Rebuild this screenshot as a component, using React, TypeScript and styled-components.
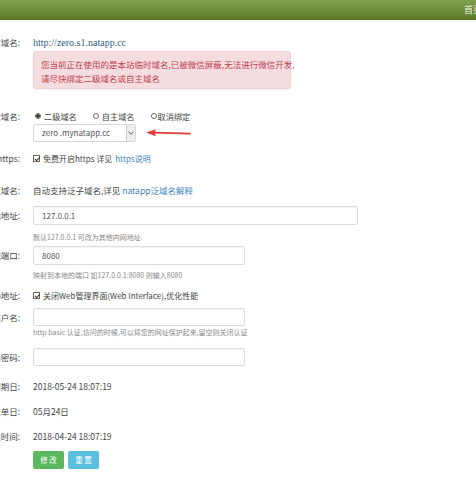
import React from "react";
import styled, { createGlobalStyle } from "styled-components";

const GlobalStyle = createGlobalStyle`
  html, body {
    margin: 0;
    padding: 0;
    background: #fff;
  }
  body {
    font-family: "Noto Sans CJK SC", "Liberation Sans", sans-serif;
    color: #333;
    overflow: hidden;
  }
`;

function App() {
  return (
    <Page>
      <GlobalStyle />
      <Header>
        <HeaderLink>首页</HeaderLink>
      </Header>
      <Form>
        <Field label="当前域名:" $top={14} $h={16}>
          <Link $dark>http://zero.s1.natapp.cc</Link>
        </Field>
        <AlertRow>
          <Alert>
            您当前正在使用的是本站临时域名,已被微信屏蔽,无法进行微信开发,
            <br />
            请尽快绑定二级域名或自主域名
          </Alert>
        </AlertRow>

        <Field label="绑定域名:" $top={19} $h={16}>
          <Radios>
            <Radio>
              <RadioDot $checked />
              二级域名
            </Radio>
            <Radio>
              <RadioDot />
              自主域名
            </Radio>
            <Radio $tight>
              <RadioDot />
              取消绑定
            </Radio>
          </Radios>
        </Field>
        <SelectRow>
          <Select>
            <SelectText>zero .mynatapp.cc</SelectText>
            <SelectArrow>
              <svg width="6" height="4" viewBox="0 0 6 4">
                <path d="M0.5 0.8 L3 3.2 L5.5 0.8" fill="none" stroke="#555" strokeWidth="1" />
              </svg>
            </SelectArrow>
          </Select>
          <Arrow width="46" height="10" viewBox="0 0 46 10">
            <path d="M45 5.6 L9 4.6" stroke="#e23a3a" strokeWidth="1.6" strokeLinecap="round" />
            <path d="M1 4.6 L11 1.2 L9.5 4.7 L11 8.2 Z" fill="#e23a3a" />
          </Arrow>
        </SelectRow>

        <Field label="https:" $top={8} $h={16}>
          <Check>
            <CheckBox />
            免费开启https 详见 <Link>https说明</Link>
          </Check>
        </Field>

        <Field label="泛域名:" $top={16} $h={16}>
          <Plain>
            自动支持泛子域名,详见 <Link>natapp泛域名解释</Link>
          </Plain>
        </Field>

        <Field label="本地地址:" $top={8} $h={19}>
          <Stack>
            <Input $w={325} $h={19}>127.0.0.1</Input>
            <Help $top={7}>默认127.0.0.1 可改为其他内网地址.</Help>
          </Stack>
        </Field>

        <Field label="本地端口:" $top={4} $h={19}>
          <Stack>
            <Input $w={212} $h={19}>8080</Input>
            <Help $top={5}>映射到本地的端口 如127.0.0.1:8080 则输入8080</Help>
          </Stack>
        </Field>

        <Field label="Web地址:" $top={7} $h={16}>
          <Check>
            <CheckBox />
            关闭Web管理界面(Web Interface),优化性能
          </Check>
        </Field>

        <Field label="Auth用户名:" $top={5} $h={18}>
          <Stack>
            <Input $w={212} $h={18} />
            <Help $top={1}>http basic 认证,访问的时候,可以将您的网址保护起来,留空则关闭认证</Help>
          </Stack>
        </Field>

        <Field label="Auth密码:" $top={11} $h={18}>
          <Input $w={212} $h={18} />
        </Field>

        <Field label="到期日:" $top={12} $h={16}>
          <Plain>2018-05-24 18:07:19</Plain>
        </Field>
        <Field label="账单日:" $top={9} $h={16}>
          <Plain>05月24日</Plain>
        </Field>
        <Field label="创建时间:" $top={9} $h={16}>
          <Plain>2018-04-24 18:07:19</Plain>
        </Field>

        <Buttons>
          <Button $color="#5cb85c">修 改</Button>
          <Button $color="#5bc0de">重 置</Button>
        </Buttons>
      </Form>
    </Page>
  );
}

type FieldProps = {
  label: string;
  $top: number;
  $h: number;
  children?: React.ReactNode;
};

function Field({ label, $top, $h, children }: FieldProps) {
  return (
    <Row $top={$top}>
      <Label $h={$h}>
        <span>{label}</span>
      </Label>
      <Value $h={$h}>{children}</Value>
    </Row>
  );
}

export default App;

const Page = styled.div`
  width: 476px;
  height: 477px;
  overflow: hidden;
`;

const Header = styled.div`
  height: 20px;
  background: linear-gradient(#81a04e, #6c8b37 60%, #5d7a2b);
  border-bottom: 1px solid #56722a;
  box-sizing: border-box;
  display: flex;
  justify-content: flex-end;
  align-items: center;
`;

const HeaderLink = styled.span`
  font-size: 9px;
  color: #f4f7ee;
  margin-right: -8px;
  width: 20px;
`;

const Form = styled.div`
  display: flex;
  flex-direction: column;
`;

const Row = styled.div<{ $top: number }>`
  display: flex;
  align-items: flex-start;
  margin-top: ${(p) => p.$top}px;
`;

const Label = styled.div<{ $h: number }>`
  width: 20px;
  flex: none;
  height: ${(p) => p.$h}px;
  line-height: ${(p) => p.$h}px;
  display: flex;
  justify-content: flex-end;
  overflow: hidden;
  white-space: nowrap;
  font-size: 8.5px;
  color: #444;
  margin-right: 13px;
`;

const Value = styled.div<{ $h: number }>`
  min-height: ${(p) => p.$h}px;
  display: flex;
  align-items: center;
  font-size: 8px;
  color: #444;
`;

const Link = styled.span<{ $dark?: boolean }>`
  color: ${(p) => (p.$dark ? "#2f5f8a" : "#3a84c4")};
  font-family: ${(p) => (p.$dark ? '"Liberation Serif", serif' : "inherit")};
  font-size: ${(p) => (p.$dark ? "10px" : "inherit")};
`;

const AlertRow = styled.div`
  margin-top: 1px;
  padding-left: 33px;
`;

const Alert = styled.div`
  width: 258px;
  height: 38px;
  box-sizing: border-box;
  padding: 5px 7px;
  background: #f4dcdf;
  border: 1px solid #efd0d5;
  border-radius: 3px;
  box-shadow: 0 1px 2px rgba(0, 0, 0, 0.06);
  color: #c0404f;
  font-size: 8.5px;
  line-height: 14px;
  white-space: nowrap;
`;

const Radios = styled.div`
  display: flex;
  align-items: center;
`;

const Radio = styled.label<{ $tight?: boolean }>`
  display: flex;
  align-items: center;
  gap: ${(p) => (p.$tight ? "1px" : "3px")};
  margin-left: 2px;
  margin-right: ${(p) => (p.$tight ? "0" : "14px")};
  font-size: 8.2px;
  color: #444;
`;

const RadioDot = styled.span<{ $checked?: boolean }>`
  width: 6px;
  height: 6px;
  border-radius: 50%;
  border: 1px solid #666;
  box-sizing: border-box;
  background: ${(p) =>
    p.$checked ? "radial-gradient(circle, #333 0 1.5px, #fff 2px)" : "#fff"};
`;

const SelectRow = styled.div`
  display: flex;
  align-items: center;
  padding-left: 33px;
`;

const Select = styled.div`
  width: 103px;
  height: 18px;
  box-sizing: border-box;
  border: 1px solid #d6d6d6;
  border-radius: 2px;
  display: flex;
  align-items: stretch;
  background: #fff;
`;

const SelectText = styled.span`
  flex: 1;
  font-size: 8px;
  color: #555;
  padding-left: 8px;
  line-height: 16px;
`;

const SelectArrow = styled.span`
  width: 8px;
  background: #eee;
  border-left: 1px solid #ccc;
  display: flex;
  align-items: center;
  justify-content: center;
`;

const Arrow = styled.svg`
  margin-left: 9px;
`;

const Check = styled.span`
  display: flex;
  align-items: center;
  gap: 3px;
  font-size: 8px;
  color: #444;
  white-space: nowrap;
`;

const CheckBox = styled.span`
  width: 7px;
  height: 7px;
  border: 1px solid #666;
  box-sizing: border-box;
  position: relative;
  &::after {
    content: "";
    position: absolute;
    left: 1.5px;
    top: 0;
    width: 2px;
    height: 3.5px;
    border: solid #333;
    border-width: 0 1px 1px 0;
    transform: rotate(45deg);
  }
`;

const Plain = styled.span`
  font-size: 8.5px;
  color: #444;
  white-space: nowrap;
`;

const Stack = styled.div`
  display: flex;
  flex-direction: column;
`;

const Input = styled.div<{ $w: number; $h: number }>`
  width: ${(p) => p.$w}px;
  height: ${(p) => p.$h}px;
  box-sizing: border-box;
  border: 1px solid #dcdcdc;
  border-radius: 2px;
  padding-left: 8px;
  font-size: 8px;
  color: #555;
  line-height: ${(p) => p.$h - 2}px;
  box-shadow: inset 0 1px 1px rgba(0, 0, 0, 0.04);
`;

const Help = styled.div<{ $top: number }>`
  margin-top: ${(p) => p.$top}px;
  font-size: 7px;
  line-height: 10px;
  color: #888;
  white-space: nowrap;
`;

const Buttons = styled.div`
  display: flex;
  gap: 4px;
  margin-top: 7px;
  padding-left: 33px;
`;

const Button = styled.button<{ $color: string }>`
  width: 31px;
  height: 18px;
  padding: 0;
  border: none;
  border-radius: 2px;
  background: ${(p) => p.$color};
  color: #fff;
  font-family: inherit;
  font-size: 7.5px;
  line-height: 18px;
`;
